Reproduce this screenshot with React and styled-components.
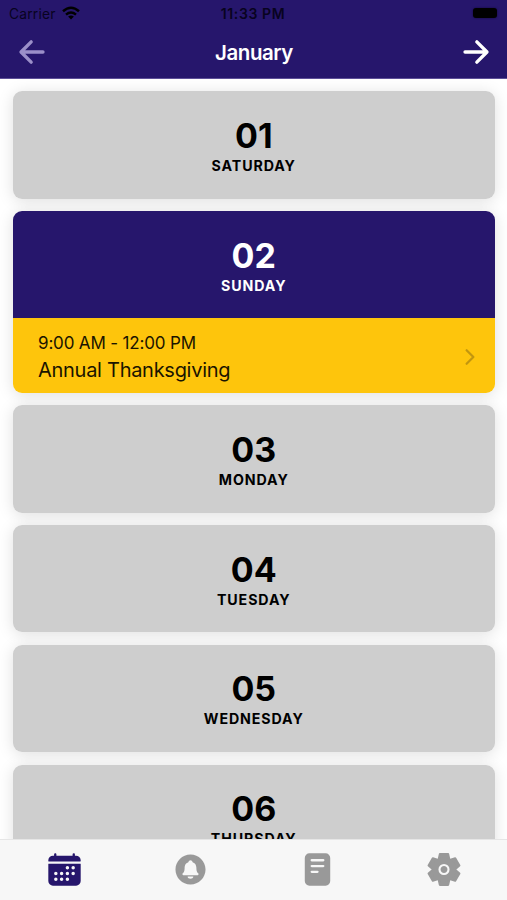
import React from "react";
import styled, { createGlobalStyle } from "styled-components";
import {
  IoArrowBack,
  IoArrowForward,
  IoCalendar,
  IoChevronForward,
  IoNotificationsCircle,
  IoReader,
} from "react-icons/io5";

const NAVY = "#26166c";

const GlobalStyle = createGlobalStyle`
  * { box-sizing: border-box; }
  body {
    margin: 0;
    background: #fff;
    font-family: Inter, "Liberation Sans", sans-serif;
    color: #000;
  }
`;

const Screen = styled.div`
  width: 507px;
  height: 900px;
  display: flex;
  flex-direction: column;
  overflow: hidden;
  background: #fff;
`;

const Header = styled.header`
  flex: none;
  height: 79px;
  background: ${NAVY};
  border-bottom: 1px solid #5d4f98;
`;

const StatusBar = styled.div`
  height: 27px;
  padding: 0 10px 0 9px;
  display: grid;
  grid-template-columns: 1fr auto 1fr;
  align-items: center;
  font-size: 13.8px;
  color: #08031f;
`;

const Carrier = styled.div`
  display: flex;
  align-items: center;
  gap: 6px;
  letter-spacing: 0.2px;
  svg { display: block; margin-top: -2px; }
`;

const Clock = styled.div`
  font-weight: 600;
  font-size: 14px;
  letter-spacing: 0.6px;
`;

const Battery = styled.div`
  justify-self: end;
  width: 24px;
  height: 10px;
  margin-top: -1px;
  border-radius: 3px;
  background: #000;
  box-shadow: 0 0 2px #100735;
`;

const NavBar = styled.div`
  height: 50px;
  padding: 0 12.5px 0 13.5px;
  display: flex;
  align-items: center;
  justify-content: space-between;
`;

const NavButton = styled.button`
  display: flex;
  padding: 0;
  border: 0;
  background: none;
  color: ${(p) => (p.$dim ? "#9b8fc9" : "#fff")};
`;

const Month = styled.h1`
  margin: 0;
  font-size: 20.5px;
  font-weight: 600;
  letter-spacing: -0.45px;
  color: #fff;
`;

const DayList = styled.main`
  flex: 1;
  min-height: 0;
  overflow: hidden;
  display: flex;
  flex-direction: column;
  gap: 12.5px;
  padding: 12.4px 12.5px 0 13px;
`;

const DayCard = styled.section`
  flex: none;
  border-radius: 9px;
  box-shadow: 0 2px 16px rgba(0, 0, 0, 0.13);
`;

const DayHeading = styled.div`
  height: 107.3px;
  padding-top: 24.6px;
  display: flex;
  flex-direction: column;
  align-items: center;
  border-radius: ${(p) => (p.$active ? "9px 9px 0 0" : "9px")};
  background: ${(p) => (p.$active ? NAVY : "#cecece")};
  color: ${(p) => (p.$active ? "#fff" : "#000")};
`;

const DayNumber = styled.div`
  font-size: 34px;
  line-height: 40px;
  font-weight: 700;
`;

const DayName = styled.div`
  font-size: 14.2px;
  line-height: 20px;
  font-weight: 700;
  letter-spacing: 0.9px;
`;

const EventRow = styled.div`
  height: 74.3px;
  padding: 2px 13px 0 25px;
  display: flex;
  align-items: center;
  justify-content: space-between;
  background: #fec50c;
  border-radius: 0 0 9px 9px;
  color: #1a1400;
  svg {
    color: #c2960f;
  }
`;

const EventTime = styled.div`
  font-size: 17px;
  line-height: 26px;
  letter-spacing: -0.16px;
`;

const EventTitle = styled.div`
  font-size: 20px;
  line-height: 28px;
  letter-spacing: -0.28px;
`;

const TabBar = styled.nav`
  flex: none;
  height: 61px;
  position: relative;
  display: grid;
  grid-template-columns: repeat(4, 1fr);
  background: #f7f7f7;
  border-top: 1px solid #e6e6e6;
`;

const Tab = styled.button`
  display: flex;
  align-items: center;
  justify-content: center;
  padding: 0 0 1px ${(p) => (p.$active ? "3px" : "1px")};
  border: 0;
  background: none;
  color: ${(p) => (p.$active ? NAVY : "#999")};
`;

const WifiIcon = () => (
  <svg width="18" height="14" viewBox="0 0 18 14" fill="none" stroke="#000" strokeWidth="2.5">
    <path d="M1 5.2Q9-1.8 17 5.2" />
    <path d="M4 8.6Q9 4.4 14 8.6" />
    <path d="M9 13.5L6.1 10.6Q9 8.3 11.9 10.6Z" fill="#000" stroke="none" />
  </svg>
);

const TOOTH = "M-5.6-9L-4.2-15.4H4.2L5.6-9V0H-5.6Z";

const GearIcon = () => (
  <svg width="37" height="37" viewBox="-18 -18.5 37 37" fill="currentColor">
    {[0, 60, 120, 180, 240, 300].map((angle) => (
      <path
        key={angle}
        d={TOOTH}
        transform={`rotate(${angle})`}
        stroke="currentColor"
        strokeWidth="2"
        strokeLinejoin="round"
      />
    ))}
    <circle r="12" />
    <circle r="4.5" stroke="#f7f7f7" strokeWidth="2.1" />
  </svg>
);

const days = [
  { number: "01", name: "SATURDAY" },
  {
    number: "02",
    name: "SUNDAY",
    event: { time: "9:00 AM - 12:00 PM", title: "Annual Thanksgiving" },
  },
  { number: "03", name: "MONDAY" },
  { number: "04", name: "TUESDAY" },
  { number: "05", name: "WEDNESDAY" },
  { number: "06", name: "THURSDAY" },
];

const Day = ({ number, name, event }) => (
  <DayCard>
    <DayHeading $active={Boolean(event)}>
      <DayNumber>{number}</DayNumber>
      <DayName>{name}</DayName>
    </DayHeading>
    {event && (
      <EventRow>
        <div>
          <EventTime>{event.time}</EventTime>
          <EventTitle>{event.title}</EventTitle>
        </div>
        <IoChevronForward size={24} />
      </EventRow>
    )}
  </DayCard>
);

export default function App() {
  return (
    <>
      <GlobalStyle />
      <Screen>
        <Header>
          <StatusBar>
            <Carrier>
              Carrier
              <WifiIcon />
            </Carrier>
            <Clock>11:33 PM</Clock>
            <Battery />
          </StatusBar>
          <NavBar>
            <NavButton $dim aria-label="Previous month">
              <IoArrowBack size={36} />
            </NavButton>
            <Month>January</Month>
            <NavButton aria-label="Next month">
              <IoArrowForward size={36} />
            </NavButton>
          </NavBar>
        </Header>
        <DayList>
          {days.map((day) => (
            <Day key={day.number} {...day} />
          ))}
        </DayList>
        <TabBar>
          <Tab $active aria-label="Calendar">
            <IoCalendar size={37} />
          </Tab>
          <Tab aria-label="Notifications">
            <IoNotificationsCircle size={37} />
          </Tab>
          <Tab aria-label="Notes">
            <IoReader size={37} />
          </Tab>
          <Tab aria-label="Settings">
            <GearIcon />
          </Tab>
        </TabBar>
      </Screen>
    </>
  );
}
